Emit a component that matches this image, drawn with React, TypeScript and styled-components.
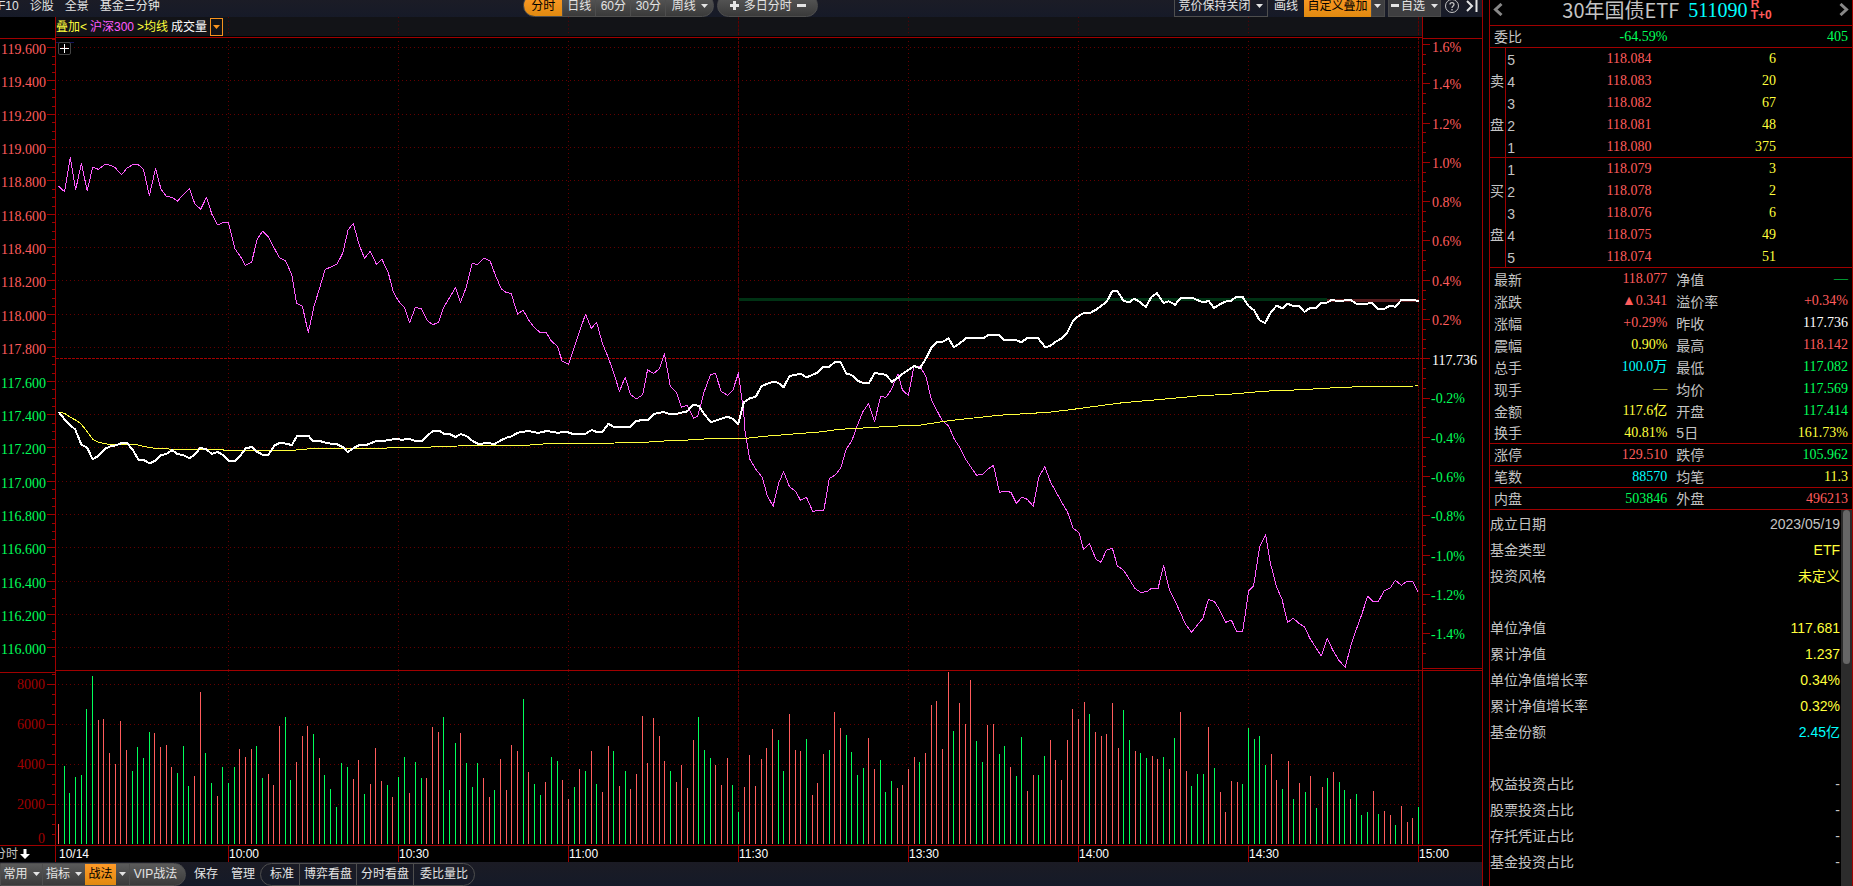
import React from 'react';
import styled, { createGlobalStyle, css } from 'styled-components';

const color = {
  line: '#a00000',
  grid: '#640000',
  up: '#ff5c5c',
  down: '#00ff5a',
  yellow: '#ffff3c',
  cyan: '#00ffff',
  white: '#ffffff',
  magenta: '#ff5cff',
  label: '#c4c4c4',
  orange: '#f7931e',
};

type Tone = 'up' | 'down' | 'yellow' | 'cyan' | 'white' | 'label';

const sans = "'Liberation Sans', 'Noto Sans CJK SC', sans-serif";
const figures = "'Liberation Serif', 'Noto Sans CJK SC', serif";

const GlobalStyle = createGlobalStyle`
  *, *::before, *::after { box-sizing: border-box; }
  body { margin: 0; background: #000; color: ${color.label}; font: 12px/16px ${sans}; }
  button { font: inherit; color: inherit; background: none; border: 0; padding: 0; margin: 0; cursor: pointer; }
  a { color: inherit; text-decoration: none; }
  svg { display: block; }
`;

/* ---------- page frame ---------- */

const Screen = styled.div`
  display: flex;
  min-height: 100vh;
  overflow: hidden;
`;

const Main = styled.main`
  flex: 1;
  min-width: 0;
  border-right: 1px solid ${color.line};
  display: flex;
  flex-direction: column;
`;

/* ---------- toolbars ---------- */

const TopBar = styled.header`
  height: 17px;
  overflow: hidden;
  display: flex;
  align-items: flex-end;
  justify-content: space-between;
  background: linear-gradient(#1b1c26, #161a28);
  color: #e4e4e4;
`;

const BottomBar = styled.footer`
  height: 24px;
  overflow: hidden;
  display: flex;
  align-items: center;
  background: linear-gradient(#1b1b24, #151a28);
  color: #e4e4e4;
`;

const MenuLinks = styled.nav`
  display: flex;
  align-items: center;
  gap: 11px;
  height: 23px;
  margin-left: -2px;
`;

const ToolGroup = styled.div<{ $gap?: number }>`
  display: flex;
  align-items: center;
  gap: ${(p) => p.$gap ?? 0}px;
`;

const PeriodGroup = styled(ToolGroup)`
  padding-left: 8px;
`;

const PillButton = styled.button<{ $active?: boolean; $w: number; $divider?: boolean }>`
  display: flex;
  align-items: center;
  justify-content: center;
  gap: 5px;
  width: ${(p) => p.$w}px;
  white-space: nowrap;
  ${(p) => p.$divider && css`border-left: 1px solid #4e4e4e;`}
  ${(p) =>
    p.$active &&
    css`
      background: linear-gradient(#ff9a28, #e08a10);
      color: #000;
    `}
`;

const Pill = styled.div<{ $shape: 'both' | 'right' | 'outline' }>`
  display: flex;
  height: 23px;
  overflow: hidden;
  border: 1px solid #4e4e4e;
  border-radius: ${(p) => (p.$shape === 'right' ? '0 12px 12px 0' : '12px')};
  background: ${(p) => (p.$shape === 'outline' ? 'transparent' : 'linear-gradient(#5a5a5a, #3a3a3a)')};
  ${(p) => p.$shape === 'outline' && css`${PillButton}:first-child { padding-left: 4px; }`}
  ${(p) => p.$shape === 'right' && css`${PillButton}:last-child { padding-right: 4px; }`}
`;

const BarButton = styled.button<{ $w: number; $kind?: 'box' | 'orange' | 'grey' }>`
  display: flex;
  align-items: center;
  justify-content: center;
  gap: 6px;
  width: ${(p) => p.$w}px;
  height: 23px;
  white-space: nowrap;
  ${(p) => p.$kind === 'box' && css`border: 1px solid #4e4e4e;`}
  ${(p) => p.$kind === 'orange' && css`background: linear-gradient(#ff9a28, #e08a10); color: #000;`}
  ${(p) => p.$kind === 'grey' && css`background: #3e3e40; border: 1px solid #4a4a4a;`}
`;

const Caret = ({ fill = '#e4e4e4' }: { fill?: string }) => (
  <svg width="7" height="4" viewBox="0 0 7 4" aria-hidden="true">
    <path d="M0 0h7L3.5 4z" fill={fill} />
  </svg>
);

/* ---------- chart ---------- */

const ChartRow = styled.div`
  display: grid;
  grid-template-columns: 56px minmax(0, 1fr) 60px;
`;

const AxisCorner = styled.div<{ $side: 'left' | 'right' }>`
  ${(p) => (p.$side === 'left' ? 'border-right' : 'border-left')}: 1px solid ${color.line};
`;

const IndicatorBar = styled.div`
  position: relative;
  height: 20px;
  padding-top: 1px;
  background: #121317;
  border-bottom: 1px solid #000;
  display: flex;
  align-items: center;
  gap: 3px;
  color: ${color.white};
  white-space: pre;
`;

const Backdrop = styled.svg`
  position: absolute;
  inset: 0;
  width: 100%;
  height: 100%;
`;

const Tag = styled.span<{ $c: string }>`
  position: relative;
  color: ${(p) => p.$c};
`;

const DropButton = styled.button`
  position: relative;
  width: 13px;
  height: 18px;
  border: 1px solid ${color.orange};
  display: flex;
  align-items: center;
  justify-content: center;
`;

const Plot = styled.div`
  position: relative;
`;

const AddButton = styled.button`
  position: absolute;
  left: 2px;
  top: 5px;
  width: 13px;
  height: 13px;
  border: 1px solid #444;
  border-radius: 2px;
`;

const PlotSvg = styled.svg`
  width: 100%;
`;

const AxisText = styled.text`
  font: 14px ${figures};
`;

const TimeRow = styled.div`
  display: grid;
  grid-template-columns: 56px 172fr repeat(7, 170fr) 64px;
  height: 17px;
  border-top: 1px solid ${color.line};
  color: ${color.white};
`;

const TimeCell = styled.div<{ $first?: boolean }>`
  border-left: 1px solid ${color.line};
  padding-left: ${(p) => (p.$first ? 2 : 0)}px;
  ${(p) => p.$first && css`border-left-color: transparent;`}
`;

const PeriodCell = styled.div`
  display: flex;
  align-items: center;
  gap: 2px;
  margin-left: -6px;
  color: ${color.label};
  white-space: nowrap;
  border-right: 1px solid ${color.line};
`;

const W = 1366;
const PRICE_H = 634;
const VOL_H = 174;
const FIRST_X = 2.5;
const MINUTE = 170 / 30;

const hourLines = [1, 2, 3, 4, 5, 6, 7, 8].map((i) => ({
  x: FIRST_X + i * 170,
  dash: i === 4 || i === 8 ? '3 1' : '1 3',
}));

const HourGrid = ({ height }: { height: number }) => (
  <g stroke={color.grid} shapeRendering="crispEdges">
    {hourLines.map((l) => (
      <line key={l.x} x1={l.x} x2={l.x} y1={0} y2={height} strokeDasharray={l.dash} />
    ))}
  </g>
);

/* Each trace is a list of "x,y" pairs on its half-session's own scale. */
const trace = (raw: string, kx: number, ox: number, oy: number) =>
  raw
    .trim()
    .split(/\s+/)
    .map((pair) => {
      const [x, y] = pair.split(',').map(Number);
      return `${(x / kx + ox).toFixed(1)},${(y / 3 + oy).toFixed(1)}`;
    })
    .join(' ');

const am = (raw: string) => trace(raw, 2.0632, -56, 103);
const pm = (raw: string) => trace(raw, 2.0103, 644, 233);

const indexLine =
  am(`121,139 133,155 145,52 156,150 168,70 180,153 191,82 203,88 217,73 229,76 238,84 251,104 262,84 275,73
  286,75 296,88 308,167 321,85 332,147 343,169 355,172 366,184 378,164 391,146 402,191 414,208 426,172 437,222
  449,255 461,247 471,247 485,327 497,352 506,376 519,367 531,296 542,274 554,291 566,325 577,354 589,362
  602,404 612,489 624,499 636,578 648,498 660,441 671,388 683,381 695,373 707,340 718,271 729,250 741,315
  752,355 764,334 777,374 788,358 801,397 811,455 822,483 835,504 845,548 857,502 869,506 881,541 893,554
  905,547 915,503 928,472 940,442 950,487 962,442 974,370 985,374 998,354 1011,362 1022,405 1034,446 1044,457
  1055,461 1068,523 1079,510 1091,541 1103,563 1115,578 1126,576 1138,604 1150,619 1160,664 1173,673 1185,622
  1196,573 1208,523 1220,565 1231,547 1243,611 1255,653 1267,702 1278,754 1290,712 1301,764 1313,777 1326,764
  1336,690 1349,700 1360,687 1371,641 1383,739 1396,758 1406,802 1418,796 1431,835 1440,827 1453,755 1466,704
  1476,700 1488,754 1501,766 1512,751 1524,697`) +
  ' ' +
  pm(`77,307 88,430 90,480 100,567 112,597 125,622 135,676 147,709 158,640 168,605 180,650 192,664 202,691
  214,682 227,725 236,720 249,720 260,625 272,615 283,594 294,537 305,514 316,467 327,426 339,401 351,455
  363,379 374,382 385,358 398,311 407,361 419,376 430,290 442,290 454,318 465,388 476,421 487,452 500,468
  511,507 522,532 533,565 544,590 556,616 568,613 578,598 590,586 602,667 613,663 625,667 636,700 647,682
  658,688 670,709 681,622 693,590 705,637 716,667 727,696 739,727 750,775 762,788 771,838 783,821 796,868
  806,877 817,841 829,835 839,888 851,900 862,925 874,955 886,967 898,965 908,955 921,955 932,886 943,956
  955,994 965,1025 976,1063 988,1087 999,1067 1011,1045 1022,988 1034,995 1044,1018 1057,1057 1068,1050
  1079,1084 1091,1084 1103,962 1113,948 1125,831 1137,794 1147,882 1159,950 1170,988 1181,1057 1193,1045
  1204,1060 1215,1070 1226,1105 1237,1130 1249,1158 1261,1105 1272,1140 1284,1170 1297,1192 1308,1130
  1319,1080 1330,1035 1342,979 1353,994 1364,994 1375,963 1387,955 1398,931 1410,946 1421,934 1433,934
  1443,965`);

const priceLine =
  am(`121,816 133,838 145,856 155,868 168,914 180,923 191,958 203,948 217,926 229,918 240,916 250,910 262,909
  274,930 286,960 297,961 309,970 320,962 332,946 343,942 355,930 366,942 378,945 391,955 402,944 413,924
  425,927 437,942 449,936 460,945 472,963 485,963 496,947 507,925 520,921 531,936 543,945 554,944 566,917
  578,908 590,911 602,915 613,888 637,888 645,903 660,903 672,908 684,911 695,913 708,922 717,936 729,925
  741,915 757,914 778,902 795,902 804,899 818,897 829,899 845,897 857,903 870,903 881,888 893,873 907,873
  916,881 927,882 940,891 951,882 962,888 975,903 987,912 1005,909 1020,912 1032,902 1045,893 1056,889
  1068,878 1090,873 1110,879 1128,873 1150,878 1170,876 1180,881 1208,881 1221,870 1231,876 1243,876 1255,851
  1266,860 1300,860 1313,842 1337,840 1349,822 1369,816 1381,822 1397,821 1418,814 1430,795 1441,797`) +
  ' ' +
  pm(`0,413 10,435 22,457 33,451 55,440 65,446 77,462 88,397 100,385 112,380 124,348 147,335 157,338 168,352
  180,318 202,311 214,322 236,308 247,291 260,290 272,275 283,277 294,311 304,314 317,332 328,339 340,339
  351,309 373,314 386,335 398,323 409,309 431,288 442,295 454,266 465,233 476,216 488,215 500,205 510,232
  522,220 535,205 571,203 580,195 601,195 611,209 635,210 646,217 658,204 680,205 694,232 704,228 716,214
  728,205 739,186 750,152 762,137 772,129 785,128 796,119 806,109 818,94 829,63 839,63 851,92 863,97 873,86
  885,97 896,111 908,80 919,70 932,99 942,94 955,104 966,84 990,84 1000,90 1011,97 1023,93 1033,114 1045,103
  1056,95 1068,92 1078,80 1091,81 1103,109 1114,121 1125,151 1136,159 1147,128 1159,107 1171,115 1181,101
  1193,108 1205,108 1215,126 1226,114 1239,114 1248,98 1260,98 1270,90 1283,93 1308,90 1319,101 1341,101
  1351,98 1363,117 1375,117 1386,108 1398,110 1410,90 1433,90 1445,93`);

const averageLine =
  am(`121,816 133,820 145,832 157,841 168,853 180,875 191,897 203,907 220,912 275,912 300,920 320,925 360,928
  440,928 470,931 605,931 640,926 790,925 820,922 885,922 900,919 945,918 1085,916 1120,912 1270,909 1330,907
  1370,903 1420,900`) +
  ' ' +
  pm(`0,508 30,505 93,505 130,499 180,493 240,486 280,478 340,473 380,469 440,466 500,452 550,444 600,436
  700,427 740,420 800,408 850,398 920,389 1000,378 1080,371 1130,364 1210,359 1290,352 1360,349 1437,348
  1443,346`);

/* One bar a minute: r for a rise, g for a fall, then the height (50 lots a pixel). */
const volumeBars = `
r20 g78 g51 g67 g69 g135 g168 r124 r125 r91 r80 r123 r94 g73 g97 g86 g112 r111 r97 r99 r77 g71 g98 g58 r68
r152 g91 g61 r48 g77 g61 g77 r95 r87 r95 g98 g66 r70 r59 r118 g127 g64 r82 r108 r118 g110 r86 g69 g55 g37
g81 g77 r65 r84 g50 r60 r96 r63 g59 r47 g67 g87 r51 g82 g66 r66 r117 r112 g127 g54 g101 r111 g81 g57 g81
r66 r47 g54 r85 r54 r99 r93 g145 r72 g60 g49 r62 g87 g83 r64 r45 g57 r75 g73 r93 g60 r52 r98 g93 r58
g73 r55 r70 r128 r81 r126 r108 r83 g73 r62 r79 r56 r104 g127 g94 g86 r79 r59 r86 g59 g32 r57 r89 r58 r85
r96 r115 g104 g73 r130 r94 r93 g105 r49 r61 r90 g94 r132 r116 g109 g92 g69 g76 r106 r75 g84 g52 g63 r56 r59
r75 r87 g82 r91 r139 r143 r95 r172 g113 r141 r120 r164 g103 g82 r119 r120 g90 g98 r77 g68 g107 r53 r69 g69
g88 r104 r84 r64 r104 r135 r125 r142 g130 r112 r108 r110 r141 r96 g134 g104 r93 g91 g86 r88 r85 g87 r75
g106 r132 r73 g58 g70 g70 r117 g76 r52 r32 r63 r62 g60 g116 g105 g108 g79 r90 r64 g55 r83 g45 r61 g52 r68
g36 r57 g66 r72 g62 g54 r45 g50 g29 g32 r53 g30 r33 r29 g19 r38 r22 r26 g37`
  .trim()
  .split(/\s+/);

const priceTicks = Array.from({ length: 19 }, (_, k) => ({
  label: (119.6 - k * 0.2).toFixed(3),
  y: 10.5 + Math.round(k * 33.35),
  fill: k < 10 ? color.up : color.down,
}));

const percentTicks = Array.from({ length: 16 }, (_, k) => ({
  value: 8 - k,
  y: 7.5 + Math.round(k * 39.27),
}));

const volumeTicks = [8000, 6000, 4000, 2000];

const PriceAxis = () => (
  <svg width="56" height={PRICE_H}>
    <g stroke={color.line} shapeRendering="crispEdges">
      <path d={`M0 1.5H55M55.5 0V${PRICE_H}`} fill="none" />
      {Array.from({ length: 75 }, (_, i) => {
        const y = 2.5 + Math.round(i * 8.34);
        return i % 4 === 1 ? null : <line key={i} x1="52" x2="55" y1={y} y2={y} />;
      })}
      {priceTicks.map((t) => (
        <line key={t.label} x1="47" x2="55" y1={t.y} y2={t.y} />
      ))}
    </g>
    {priceTicks.map((t) => (
      <AxisText key={t.label} x="46" y={t.y + 6} textAnchor="end" fill={t.fill}>
        {t.label}
      </AxisText>
    ))}
  </svg>
);

const PercentAxis = () => (
  <svg width="60" height={PRICE_H}>
    <g stroke={color.line} shapeRendering="crispEdges">
      <path d={`M0 1.5H60M.5 0V${PRICE_H}M0 631.5H60M0 633.5H60`} fill="none" />
      {Array.from({ length: 63 }, (_, i) => {
        const y = 7.5 + Math.round(i * 9.82);
        return <line key={i} x1="0" x2={i % 4 === 0 ? 8 : 4} y1={y} y2={y} />;
      })}
    </g>
    {percentTicks.map((t) =>
      t.value === 0 ? (
        <AxisText key="base" x="10" y={t.y + 6} fill={color.white}>
          117.736
        </AxisText>
      ) : (
        <AxisText
          key={t.value}
          x={t.value > 0 ? 10 : 9}
          y={t.y + (t.value === 8 ? 7 : 5)}
          fill={t.value > 0 ? color.up : color.down}
        >
          {`${(t.value / 5).toFixed(1)}%`}
        </AxisText>
      ),
    )}
  </svg>
);

const VolumeAxis = () => (
  <svg width="56" height={VOL_H}>
    <g stroke={color.line} shapeRendering="crispEdges">
      <path d={`M0 1.5H55M55.5 0V${VOL_H}`} fill="none" />
      {Array.from({ length: 17 }, (_, i) => {
        const y = 3.5 + i * 10;
        return <line key={i} x1={i % 4 === 1 ? 47 : 52} x2="55" y1={y} y2={y} />;
      })}
    </g>
    {volumeTicks.map((v, i) => (
      <AxisText key={v} x="45" y={18 + i * 40} textAnchor="end" fill={color.line}>
        {v}
      </AxisText>
    ))}
    <AxisText x="45" y="172" textAnchor="end" fill={color.line}>
      0
    </AxisText>
  </svg>
);

const PricePlot = () => (
  <PlotSvg height={PRICE_H} viewBox={`0 0 ${W} ${PRICE_H}`} preserveAspectRatio="none" role="img" aria-label="分时走势">
    <HourGrid height={PRICE_H} />
    <g stroke={color.grid} strokeDasharray="1 3" shapeRendering="crispEdges">
      {priceTicks.map((t) => (
        <line key={t.label} x1="2" x2={W - 3} y1={t.y} y2={t.y} />
      ))}
    </g>
    <g shapeRendering="crispEdges">
      <path d={`M0 .5H${W}M0 633.5H${W}`} stroke={color.line} />
      <path d={`M0 321.5H${W}`} stroke={color.line} strokeDasharray="3 1" />
      <path d="M0 5.5H18" stroke="#14145a" />
      <rect x="683" y="261" width="588" height="3" fill="#003214" />
      <rect x="1271" y="262" width="92" height="3" fill="#5a1e20" />
    </g>
    <g fill="none" strokeLinejoin="round" shapeRendering="crispEdges">
      <polyline points={indexLine} stroke={color.magenta} />
      <polyline points={averageLine} stroke={color.yellow} />
      <polyline points={priceLine} stroke={color.white} strokeWidth="2" />
    </g>
  </PlotSvg>
);

const VolumePlot = () => (
  <PlotSvg height={VOL_H} viewBox={`0 0 ${W} ${VOL_H}`} preserveAspectRatio="none" role="img" aria-label="成交量">
    <HourGrid height={VOL_H} />
    <g stroke={color.grid} strokeDasharray="1 3" shapeRendering="crispEdges">
      {volumeTicks.map((v, i) => (
        <line key={v} x1="2" x2={W - 3} y1={13.5 + i * 40} y2={13.5 + i * 40} />
      ))}
    </g>
    <g shapeRendering="crispEdges">
      {volumeBars.map((bar, i) => {
        const h = Number(bar.slice(1));
        return (
          <rect
            key={i}
            x={Math.floor(FIRST_X + i * MINUTE)}
            y={173 - h}
            width="1"
            height={h}
            fill={bar[0] === 'r' ? color.up : color.down}
          />
        );
      })}
    </g>
  </PlotSvg>
);

/* ---------- quote panel ---------- */

const Panel = styled.aside`
  width: 364px;
  margin-left: 6px;
  flex: none;
  border: solid ${color.line};
  border-width: 0 1px;
  display: flex;
  flex-direction: column;
`;

const Title = styled.div`
  height: 26px;
  padding: 0 3px 6px;
  overflow: hidden;
  border-bottom: 1px solid ${color.line};
  display: flex;
  align-items: center;
  justify-content: space-between;
`;

const TitleText = styled.div`
  display: flex;
  align-items: center;
  gap: 9px;
  padding-right: 8px;
  white-space: nowrap;
`;

const FundName = styled.h1`
  margin: 0;
  font: 400 20px/24px 'Noto Sans CJK SC', sans-serif;
`;

const FundCode = styled.span`
  font: 20px/24px 'Liberation Serif', serif;
  color: ${color.cyan};
`;

const Badges = styled.span`
  display: flex;
  flex-direction: column;
  margin-left: -6px;
  font: bold 12px/11px ${sans};
  color: ${color.up};
`;

const Data = styled.table`
  width: 100%;
  border-collapse: separate;
  border-spacing: 0;
  table-layout: fixed;
`;

const Row = styled.tr<{ $rule?: boolean }>`
  height: 22px;
  ${(p) => p.$rule && css`& > * { border-bottom: 1px solid ${color.line}; }`}
`;

const Label = styled.th<{ $pad?: number }>`
  padding: 1px 0 0 ${(p) => p.$pad ?? 4}px;
  height: 22px;
  font: 14px/20px ${sans};
  text-align: left;
`;

const Value = styled.td<{ $tone: Tone; $pad?: number }>`
  padding: 0 ${(p) => p.$pad ?? 0}px 0 0;
  height: 22px;
  font: 14px/20px ${figures};
  text-align: right;
  color: ${(p) => color[p.$tone]};
`;

const BookSide = styled.section`
  display: flex;
  border-bottom: 1px solid ${color.line};
  height: 110px;
`;

const SideName = styled.div`
  width: 17px;
  border-right: 1px solid ${color.line};
  display: flex;
  flex-direction: column;
  justify-content: center;
  gap: 24px;
  font: 14px/20px ${sans};
`;

const Details = styled.div`
  flex: 1;
  display: flex;
  justify-content: space-between;
`;

const DetailList = styled.dl`
  flex: 1;
  margin: 0;
  padding: 1px 1px 0 0;
  font: 14px/26px ${sans};
`;

const DetailRow = styled.div<{ $group?: boolean }>`
  display: flex;
  justify-content: space-between;
  margin-top: ${(p) => (p.$group ? 26 : 0)}px;
`;

const Term = styled.dt``;

const Desc = styled.dd<{ $tone: Tone }>`
  margin: 0;
  color: ${(p) => color[p.$tone]};
`;

const ScrollTrack = styled.div`
  width: 11px;
  padding: 0 2px;
  background: #2c2c2c;
`;

const ScrollThumb = styled.div`
  height: 154px;
  border-radius: 4px;
  background: #666;
`;

const sells: [string, string, string][] = [
  ['5', '118.084', '6'],
  ['4', '118.083', '20'],
  ['3', '118.082', '67'],
  ['2', '118.081', '48'],
  ['1', '118.080', '375'],
];

const buys: [string, string, string][] = [
  ['1', '118.079', '3'],
  ['2', '118.078', '2'],
  ['3', '118.076', '6'],
  ['4', '118.075', '49'],
  ['5', '118.074', '51'],
];

type Stat = [string, string, Tone, string, string, Tone, boolean?];

const stats: Stat[] = [
  ['最新', '118.077', 'up', '净值', '—', 'down'],
  ['涨跌', '▲0.341', 'up', '溢价率', '+0.34%', 'up'],
  ['涨幅', '+0.29%', 'up', '昨收', '117.736', 'white'],
  ['震幅', '0.90%', 'yellow', '最高', '118.142', 'up'],
  ['总手', '100.0万', 'cyan', '最低', '117.082', 'down'],
  ['现手', '—', 'yellow', '均价', '117.569', 'down'],
  ['金额', '117.6亿', 'yellow', '开盘', '117.414', 'down'],
  ['换手', '40.81%', 'yellow', '5日', '161.73%', 'yellow', true],
  ['涨停', '129.510', 'up', '跌停', '105.962', 'down', true],
  ['笔数', '88570', 'cyan', '均笔', '11.3', 'yellow', true],
  ['内盘', '503846', 'down', '外盘', '496213', 'up', true],
];

const details: { term: string; desc: string; tone: Tone; group?: boolean }[] = [
  { term: '成立日期', desc: '2023/05/19', tone: 'label' },
  { term: '基金类型', desc: 'ETF', tone: 'yellow' },
  { term: '投资风格', desc: '未定义', tone: 'yellow' },
  { term: '单位净值', desc: '117.681', tone: 'yellow', group: true },
  { term: '累计净值', desc: '1.237', tone: 'yellow' },
  { term: '单位净值增长率', desc: '0.34%', tone: 'yellow' },
  { term: '累计净值增长率', desc: '0.32%', tone: 'yellow' },
  { term: '基金份额', desc: '2.45亿', tone: 'cyan' },
  { term: '权益投资占比', desc: '-', tone: 'label', group: true },
  { term: '股票投资占比', desc: '-', tone: 'label' },
  { term: '存托凭证占比', desc: '-', tone: 'label' },
  { term: '基金投资占比', desc: '-', tone: 'label' },
];

const Chevron = ({ flip }: { flip?: boolean }) => (
  <svg width="10" height="13" viewBox="0 0 10 13" fill="none" stroke="#888" strokeWidth="3" aria-hidden="true">
    <path d={flip ? 'M1.5 1l6 5.5-6 5.5' : 'M8.500 1l-6 5.500 6 5.500'} />
  </svg>
);

const Book = ({ name, rows }: { name: string; rows: [string, string, string][] }) => (
  <BookSide>
    <SideName>
      {name.split('').map((c) => (
        <span key={c}>{c}</span>
      ))}
    </SideName>
    <Data>
      <colgroup>
        <col width="10%" />
        <col width="32%" />
        <col />
      </colgroup>
      <tbody>
        {rows.map(([level, price, qty]) => (
          <Row key={level}>
            <Label $pad={1}>{level}</Label>
            <Value $tone="up">{price}</Value>
            <Value $tone="yellow" $pad={76}>
              {qty}
            </Value>
          </Row>
        ))}
      </tbody>
    </Data>
  </BookSide>
);

const QuotePanel = () => (
  <Panel>
    <Title>
      <button aria-label="上一只">
        <Chevron />
      </button>
      <TitleText>
        <FundName>30年国债ETF</FundName>
        <FundCode>511090</FundCode>
        <Badges>
          <span>R</span>
          <span>T+0</span>
        </Badges>
      </TitleText>
      <button aria-label="下一只">
        <Chevron flip />
      </button>
    </Title>
    <Data>
      <tbody>
        <Row $rule>
          <Label>委比</Label>
          <Value $tone="down" $pad={64}>
            -64.59%
          </Value>
          <Value $tone="down" $pad={4}>
            405
          </Value>
        </Row>
      </tbody>
    </Data>
    <Book name="卖盘" rows={sells} />
    <Book name="买盘" rows={buys} />
    <Data>
      <colgroup>
        <col width="19%" />
        <col width="30%" />
        <col width="22%" />
        <col width="29%" />
      </colgroup>
      <tbody>
        {stats.map(([l1, v1, t1, l2, v2, t2, rule]) => (
          <Row key={l1} $rule={rule}>
            <Label>{l1}</Label>
            <Value $tone={t1}>{v1}</Value>
            <Label $pad={9}>{l2}</Label>
            <Value $tone={t2} $pad={4}>
              {v2}
            </Value>
          </Row>
        ))}
      </tbody>
    </Data>
    <Details>
      <DetailList>
        {details.map((d) => (
          <DetailRow key={d.term} $group={d.group}>
            <Term>{d.term}</Term>
            <Desc $tone={d.tone}>{d.desc}</Desc>
          </DetailRow>
        ))}
      </DetailList>
      <ScrollTrack>
        <ScrollThumb />
      </ScrollTrack>
    </Details>
  </Panel>
);

const TopToolbar = () => (
  <TopBar>
    <MenuLinks>
      <a href="#f10">F10</a>
      <a href="#diagnose">诊股</a>
      <a href="#panorama">全景</a>
      <a href="#fund">基金三分钟</a>
    </MenuLinks>
    <PeriodGroup $gap={3}>
      <Pill $shape="both">
        <PillButton $w={38} $active>分时</PillButton>
        <PillButton $w={33} $divider>日线</PillButton>
        <PillButton $w={35} $divider>60分</PillButton>
        <PillButton $w={35} $divider>30分</PillButton>
        <PillButton $w={48} $divider>
          周线 <Caret />
        </PillButton>
      </Pill>
      <Pill $shape="both">
        <PillButton $w={99}>
          <svg width="9" height="9" viewBox="0 0 9 9" aria-hidden="true">
            <path d="M4.500 0v9M0 4.500h9" stroke="#e4e4e4" strokeWidth="3" />
          </svg>
          多日分时
          <svg width="9" height="3" viewBox="0 0 9 3" aria-hidden="true">
            <path d="M0 1.500h9" stroke="#e4e4e4" strokeWidth="3" />
          </svg>
        </PillButton>
      </Pill>
    </PeriodGroup>
    <ToolGroup $gap={3}>
      <BarButton $w={94} $kind="box">
        竞价保持关闭 <Caret />
      </BarButton>
      <BarButton $w={30}>画线</BarButton>
      <ToolGroup>
        <BarButton $w={67} $kind="orange">自定义叠加</BarButton>
        <BarButton $w={14} $kind="grey" aria-label="叠加选项">
          <Caret />
        </BarButton>
      </ToolGroup>
      <BarButton $w={53} $kind="grey">
        <ToolGroup $gap={2}>
          <svg width="8" height="3" viewBox="0 0 8 3" aria-hidden="true">
            <path d="M0 1.500h8" stroke="#e4e4e4" strokeWidth="3" />
          </svg>
          自选
        </ToolGroup>
        <Caret />
      </BarButton>
      <BarButton $w={16} aria-label="帮助">
        <svg width="14" height="14" viewBox="0 0 14 14" fill="none" stroke="#c4c4c4" aria-hidden="true">
          <circle cx="7" cy="7" r="6.500" />
          <path d="M5 5.500C5 3 9 3 9 5.500 9 7 7 7 7 9M7 10v1.500" strokeWidth="1.300" />
        </svg>
      </BarButton>
      <BarButton $w={19} aria-label="收起">
        <svg width="12" height="12" viewBox="0 0 12 12" fill="none" stroke="#e4e4e4" strokeWidth="2" aria-hidden="true">
          <path d="M1 1l5 5-5 5M10.500 0v12" />
        </svg>
      </BarButton>
    </ToolGroup>
  </TopBar>
);

const BottomToolbar = () => (
  <BottomBar>
    <Pill $shape="right">
      <PillButton $w={41}>
        常用 <Caret />
      </PillButton>
      <PillButton $w={43} $divider>
        指标 <Caret />
      </PillButton>
      <PillButton $w={31} $active>战法</PillButton>
      <PillButton $w={13} aria-label="战法选项">
        <Caret />
      </PillButton>
      <PillButton $w={56} $divider>VIP战法</PillButton>
    </Pill>
    <BarButton $w={40}>保存</BarButton>
    <BarButton $w={34}>管理</BarButton>
    <Pill $shape="outline">
      <PillButton $w={38}>标准</PillButton>
      <PillButton $w={57} $divider>博弈看盘</PillButton>
      <PillButton $w={57} $divider>分时看盘</PillButton>
      <PillButton $w={61} $divider>委比量比</PillButton>
    </Pill>
  </BottomBar>
);

export default function App() {
  return (
    <>
      <GlobalStyle />
      <Screen>
        <Main>
          <TopToolbar />
          <ChartRow>
            <AxisCorner $side="left" />
            <IndicatorBar>
              <Backdrop viewBox={`0 0 ${W} 20`} preserveAspectRatio="none" aria-hidden="true">
                <HourGrid height={20} />
              </Backdrop>
              <Tag $c={color.yellow}>叠加&lt;</Tag>
              <Tag $c={color.magenta}>沪深300</Tag>
              <Tag $c={color.yellow}>&gt;均线</Tag>
              <Tag $c={color.white}>成交量</Tag>
              <DropButton aria-label="选择指标">
                <Caret fill={color.orange} />
              </DropButton>
            </IndicatorBar>
            <AxisCorner $side="right" />
          </ChartRow>
          <ChartRow>
            <PriceAxis />
            <Plot>
              <PricePlot />
              <AddButton aria-label="添加">
                <svg width="11" height="11" viewBox="0 0 11 11" stroke="#fff" shapeRendering="crispEdges">
                  <path d="M5.500 1v9M1 5.500h9" />
                </svg>
              </AddButton>
            </Plot>
            <PercentAxis />
          </ChartRow>
          <ChartRow>
            <VolumeAxis />
            <VolumePlot />
            <AxisCorner $side="right" />
          </ChartRow>
          <TimeRow>
            <PeriodCell>
              分时
              <svg width="10" height="10" viewBox="0 0 10 10" fill="#fff" aria-hidden="true">
                <path d="M3.500 0h3v5H10L5 10 0 5h3.500z" />
              </svg>
            </PeriodCell>
            <TimeCell $first>10/14</TimeCell>
            {['10:00', '10:30', '11:00', '11:30', '13:30', '14:00', '14:30', '15:00'].map((t) => (
              <TimeCell key={t}>{t}</TimeCell>
            ))}
          </TimeRow>
          <BottomToolbar />
        </Main>
        <QuotePanel />
      </Screen>
    </>
  );
}
